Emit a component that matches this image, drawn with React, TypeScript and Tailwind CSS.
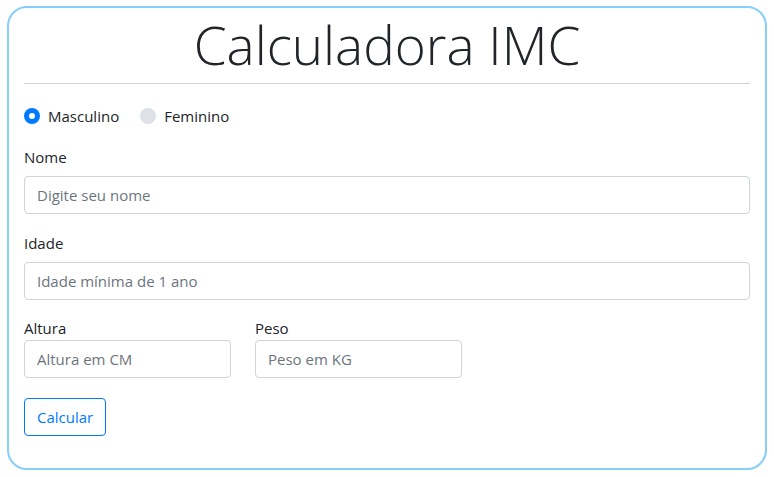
import { useState } from 'react';

const font = { fontFamily: '"Open Sans", "Noto Sans", sans-serif' };

const Field = ({ label, placeholder, className = '' }: { label: string; placeholder: string; className?: string }) => (
  <div className={className}>
    <label className="block text-[15px] leading-6 text-[#212529] mb-[7px]">{label}</label>
    <input
      placeholder={placeholder}
      className="block w-full h-[38px] px-3 text-[15px] border border-[#ced4da] rounded-[4px] text-[#495057] placeholder:text-[#6c757d] outline-none"
    />
  </div>
);

const Radio = ({ label, checked, onClick }: { label: string; checked: boolean; onClick: () => void }) => (
  <button type="button" onClick={onClick} className="flex items-center gap-2 text-[15px] leading-6 text-[#212529]">
    {checked ? (
      <span className="w-4 h-4 rounded-full bg-[#007bff] flex items-center justify-center">
        <span className="w-[6px] h-[6px] rounded-full bg-white" />
      </span>
    ) : (
      <span className="w-4 h-4 rounded-full bg-[#dee2e6]" />
    )}
    {label}
  </button>
);

const App = () => {
  const [sexo, setSexo] = useState('m');

  return (
    <div className="bg-white min-h-[477px] pt-[6px] px-[7px]" style={font}>
      <div className="border-2 border-[#87cefa] rounded-[20px] px-[15px] pt-[3px] pb-[32px]">
        <h1 className="text-center text-[53px] leading-[67px] font-light text-[#212529]">Calculadora IMC</h1>
        <hr className="mt-[5px] border-0 border-t border-[#d3d3d3]" />
        <div className="flex gap-[21px] mt-5">
          <Radio label="Masculino" checked={sexo === 'm'} onClick={() => setSexo('m')} />
          <Radio label="Feminino" checked={sexo === 'f'} onClick={() => setSexo('f')} />
        </div>
        <Field label="Nome" placeholder="Digite seu nome" className="mt-[17px]" />
        <Field label="Idade" placeholder="Idade mínima de 1 ano" className="mt-[17px]" />
        <div className="flex gap-6 mt-4">
          <div className="w-[207px]">
            <label className="block text-[15px] leading-6 text-[#212529]">Altura</label>
            <input placeholder="Altura em CM" className="block w-full h-[38px] px-3 text-[15px] border border-[#ced4da] rounded-[4px] placeholder:text-[#6c757d] outline-none" />
          </div>
          <div className="w-[207px]">
            <label className="block text-[15px] leading-6 text-[#212529]">Peso</label>
            <input placeholder="Peso em KG" className="block w-full h-[38px] px-3 text-[15px] border border-[#ced4da] rounded-[4px] placeholder:text-[#6c757d] outline-none" />
          </div>
        </div>
        <button type="button" className="mt-5 h-[38px] px-3 border border-[#007bff] rounded-[4px] text-[#007bff] text-[15px]">
          Calcular
        </button>
      </div>
    </div>
  );
};

export default App;
